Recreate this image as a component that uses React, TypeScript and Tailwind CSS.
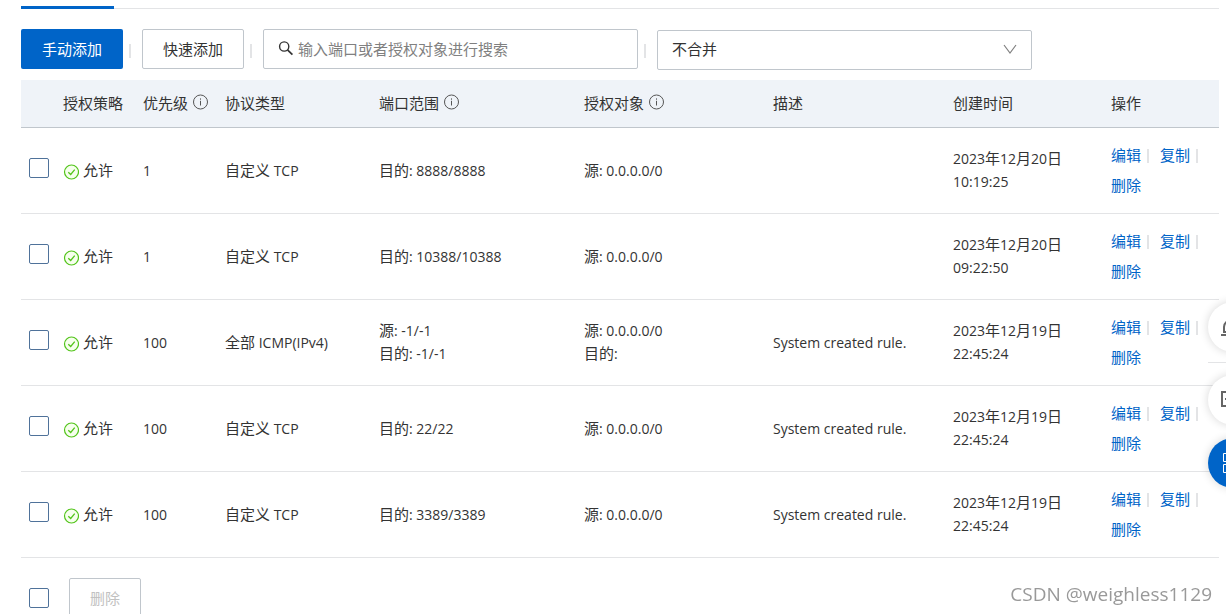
import { ChangeEvent, useState } from "react";

interface Rule {
  id: number;
  priority: string;
  protocol: string;
  ports: string[];
  targets: string[];
  description: string;
  date: string;
  time: string;
}

const RULES: Rule[] = [
  {
    id: 1,
    priority: "1",
    protocol: "自定义 TCP",
    ports: ["目的: 8888/8888"],
    targets: ["源: 0.0.0.0/0"],
    description: "",
    date: "2023年12月20日",
    time: "10:19:25",
  },
  {
    id: 2,
    priority: "1",
    protocol: "自定义 TCP",
    ports: ["目的: 10388/10388"],
    targets: ["源: 0.0.0.0/0"],
    description: "",
    date: "2023年12月20日",
    time: "09:22:50",
  },
  {
    id: 3,
    priority: "100",
    protocol: "全部 ICMP(IPv4)",
    ports: ["源: -1/-1", "目的: -1/-1"],
    targets: ["源: 0.0.0.0/0", "目的:"],
    description: "System created rule.",
    date: "2023年12月19日",
    time: "22:45:24",
  },
  {
    id: 4,
    priority: "100",
    protocol: "自定义 TCP",
    ports: ["目的: 22/22"],
    targets: ["源: 0.0.0.0/0"],
    description: "System created rule.",
    date: "2023年12月19日",
    time: "22:45:24",
  },
  {
    id: 5,
    priority: "100",
    protocol: "自定义 TCP",
    ports: ["目的: 3389/3389"],
    targets: ["源: 0.0.0.0/0"],
    description: "System created rule.",
    date: "2023年12月19日",
    time: "22:45:24",
  },
];

const COLUMNS = [
  { label: "授权策略", width: "w-[80px]", info: false },
  { label: "优先级", width: "w-[82px]", info: true },
  { label: "协议类型", width: "w-[154px]", info: false },
  { label: "端口范围", width: "w-[205px]", info: true },
  { label: "授权对象", width: "w-[189px]", info: true },
  { label: "描述", width: "w-[180px]", info: false },
  { label: "创建时间", width: "w-[158px]", info: false },
  { label: "操作", width: "w-[116px]", info: false },
];

// Chinese runs are set one size larger than the latin text around them
function Mixed({ text }: { text: string }) {
  return (
    <div className="h-[23px] whitespace-pre font-['Open_Sans','Noto_Sans_CJK_SC',sans-serif] text-sm leading-[23px]">
      {text.split(/([\u4e00-\u9fff]+)/).map((part, i) =>
        i % 2 === 1 ? (
          <span key={i} className="text-[15px] leading-[23px]">
            {part}
          </span>
        ) : (
          part
        ),
      )}
    </div>
  );
}

function InfoIcon() {
  return (
    <svg viewBox="0 0 16 16" className="h-4 w-4 shrink-0" fill="none" stroke="#555">
      <circle cx="8.5" cy="8" r="7" />
      <path d="M8.5 6.8v4.7M8.5 4.4v1.3" />
    </svg>
  );
}

function AllowIcon() {
  return (
    <svg viewBox="0 0 16 16" className="mt-1.5 h-4 w-4 shrink-0" fill="none" stroke="#52c41a">
      <circle cx="8.5" cy="8" r="7" fill="#f6ffed" strokeWidth="1.2" />
      <path d="M5.3 8.2l2.4 2.3 4-4.8" strokeWidth="1.3" />
    </svg>
  );
}

function SearchIcon() {
  return (
    <svg viewBox="0 0 16 16" className="h-4 w-4 shrink-0" fill="none" stroke="#333">
      <circle cx="6.2" cy="6.5" r="4.6" strokeWidth="1.4" />
      <path d="M9.5 9.8l4.9 4.9" strokeWidth="1.7" />
    </svg>
  );
}

function Separator() {
  return <span className="ml-1.5 mr-[11px] mt-1 h-3.5 w-0.5 bg-[#e3e4e6]" />;
}

interface CheckProps {
  label: string;
  checked: boolean;
  onChange: (e: ChangeEvent<HTMLInputElement>) => void;
}

function Check({ label, checked, onChange }: CheckProps) {
  return (
    <input
      type="checkbox"
      aria-label={label}
      checked={checked}
      onChange={onChange}
      className="block h-5 w-5 appearance-none rounded-[2px] border border-[#4f729a] bg-white checked:bg-[#0064c8]"
    />
  );
}

function RuleRow({ rule, ...check }: { rule: Rule } & Omit<CheckProps, "label">) {
  return (
    <tr className="h-[86px] border-b border-[#e3e4e6]">
      <td className="px-2 pb-1">
        <Check label={`选择规则 ${rule.id}`} {...check} />
      </td>
      <td className="px-2 pb-0.5">
        <span className="flex items-center gap-1">
          <AllowIcon />
          允许
        </span>
      </td>
      <td className="px-2">
        <Mixed text={rule.priority} />
      </td>
      <td className="px-2">
        <Mixed text={rule.protocol} />
      </td>
      <td className="px-2">
        {rule.ports.map((port) => (
          <Mixed key={port} text={port} />
        ))}
      </td>
      <td className="px-2">
        {rule.targets.map((target) => (
          <Mixed key={target} text={target} />
        ))}
      </td>
      <td className="px-2">
        <Mixed text={rule.description} />
      </td>
      <td className="px-2">
        <Mixed text={rule.date} />
        <Mixed text={rule.time} />
      </td>
      <td className="pb-0.5 pl-2 text-[#0064c8]">
        <div className="flex h-[30px] items-center">
          <a href="#edit">编辑</a>
          <Separator />
          <a href="#copy">复制</a>
          <Separator />
        </div>
        <div className="flex h-[30px] items-center">
          <a href="#delete">删除</a>
        </div>
      </td>
    </tr>
  );
}

function FloatingTools() {
  return (
    <div className="fixed -right-8 top-[302px] flex w-[50px] flex-col">
      <button
        type="button"
        aria-label="消息"
        className="flex h-[50px] items-center rounded-full bg-white pl-3 shadow-[0_0_10px_rgba(0,0,0,0.16)]"
      >
        <svg viewBox="0 0 24 24" className="h-6 w-6" fill="none" stroke="#666" strokeWidth="2">
          <path d="M1 20h22M4 17v-5a8 7 0 0 1 16 0v5zM7 17v-4" />
        </svg>
      </button>
      <div className="mb-3 mt-2.5 h-px bg-[#e3e4e6]" />
      <button
        type="button"
        aria-label="反馈"
        className="flex h-[50px] items-center rounded-full bg-white pl-3 shadow-[0_0_10px_rgba(0,0,0,0.16)]"
      >
        <svg viewBox="0 0 24 24" className="h-6 w-6" fill="none" stroke="#666" strokeWidth="2">
          <path d="M2 4h20v14H2zM5 11h8" />
        </svg>
      </button>
      <button
        type="button"
        aria-label="更多"
        className="mt-[13px] flex h-[50px] items-center rounded-full bg-[#0064c8] pl-3 shadow-[0_0_10px_rgba(0,0,0,0.16)]"
      >
        <svg viewBox="0 0 24 24" className="h-6 w-6" fill="none" stroke="#fff">
          <path d="M3.5 2.5h8v8h-8zM14.5 2.5h8v8h-8zM3.5 13.5h8v8h-8zM14.5 13.5h8v8h-8z" />
        </svg>
      </button>
    </div>
  );
}

export default function App() {
  const [selected, setSelected] = useState<number[]>([]);
  const [query, setQuery] = useState("");

  const toggle = (id: number) =>
    setSelected((ids) => (ids.includes(id) ? ids.filter((i) => i !== id) : [...ids, id]));
  const allSelected = selected.length === RULES.length;

  return (
    <main className="h-screen overflow-hidden bg-white pl-[21px] pr-[7px] font-['Noto_Sans_CJK_SC',sans-serif] text-[15px] leading-[23px] text-[#333]">
      <div className="flex h-[9px] items-end">
        <div className="h-[3px] w-[93px] bg-[#0064c8]" />
        <div className="h-px flex-1 bg-[#e3e4e6]" />
      </div>

      <div className="mt-5 flex h-[51px] items-start">
        <button type="button" className="h-10 w-[102px] rounded-[2px] bg-[#0064c8] pb-0.5 text-white">
          手动添加
        </button>
        <div className="flex h-10 items-center">
          <Separator />
        </div>
        <button type="button" className="h-10 w-[102px] rounded-[2px] border border-[#c0c6cc] pb-0.5">
          快速添加
        </button>
        <div className="flex h-10 items-center">
          <Separator />
        </div>
        <label className="flex h-10 w-[375px] items-center gap-1 rounded-[2px] border border-[#c0c6cc] pb-0.5 pl-3.5">
          <SearchIcon />
          <input
            type="text"
            aria-label="搜索"
            value={query}
            onChange={(e) => setQuery(e.target.value)}
            placeholder="输入端口或者授权对象进行搜索"
            className="min-w-0 flex-1 outline-none placeholder:text-[#808080]"
          />
        </label>
        <div className="flex h-10 items-center">
          <Separator />
        </div>
        <div className="relative mt-px w-[375px]">
          <select
            aria-label="合并方式"
            className="h-10 w-full appearance-none rounded-[2px] border border-[#c0c6cc] bg-white px-3.5 pb-1"
          >
            <option>不合并</option>
            <option>合并</option>
          </select>
          <svg
            viewBox="0 0 14 10"
            className="pointer-events-none absolute right-[15px] top-3.5 h-2.5 w-3.5"
            fill="none"
            stroke="#808080"
            strokeWidth="1.2"
          >
            <path d="M1 1l6 8 6-8" />
          </svg>
        </div>
      </div>

      <table className="w-full table-fixed border-collapse text-left">
        <thead>
          <tr className="h-[47px] border-b border-[#c0c6cc] bg-[#eff3f8]">
            <th className="w-[34px]" />
            {COLUMNS.map((col) => (
              <th key={col.label} className={`${col.width} whitespace-nowrap pb-0.5 pl-2 font-normal`}>
                <span className="flex items-center gap-1">
                  {col.label}
                  {col.info && <InfoIcon />}
                </span>
              </th>
            ))}
          </tr>
        </thead>
        <tbody>
          {RULES.map((rule) => (
            <RuleRow
              key={rule.id}
              rule={rule}
              checked={selected.includes(rule.id)}
              onChange={() => toggle(rule.id)}
            />
          ))}
        </tbody>
      </table>

      <div className="flex items-center gap-5 pl-2 pt-5">
        <Check
          label="全选"
          checked={allSelected}
          onChange={() => setSelected(allSelected ? [] : RULES.map((r) => r.id))}
        />
        <button
          type="button"
          disabled={selected.length === 0}
          className="h-10 w-[72px] rounded-[2px] border border-[#c0c6cc] disabled:text-[#c1c1c1]"
        >
          删除
        </button>
      </div>

      <FloatingTools />

      <div className="fixed bottom-1.5 right-3.5 font-['Open_Sans',sans-serif] text-[19px] leading-7 text-[#999]">
        CSDN @weighless1129
      </div>
    </main>
  );
}
